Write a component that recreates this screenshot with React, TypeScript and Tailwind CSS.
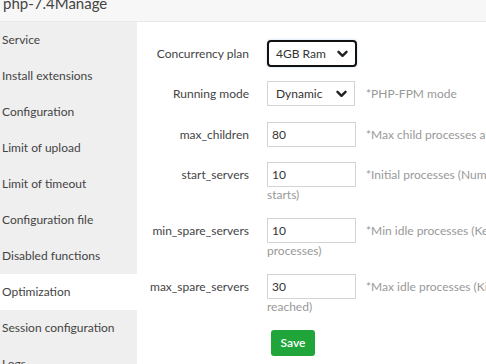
import type { ReactNode } from "react";

const MENU = [
  "Service",
  "Install extensions",
  "Configuration",
  "Limit of upload",
  "Limit of timeout",
  "Configuration file",
  "Disabled functions",
  "Optimization",
  "Session configuration",
  "Logs",
];

function Chevron() {
  return (
    <svg width="11" height="8" viewBox="0 0 11 8" className="pointer-events-none absolute right-[7px] top-1/2 -translate-y-1/2">
      <path d="M1.5 1.8 L5.5 5.8 L9.5 1.8" fill="none" stroke="#222" strokeWidth="2.4" strokeLinecap="round" strokeLinejoin="round" />
    </svg>
  );
}

function Row({ label, children, className = "" }: { label: string; children: ReactNode; className?: string }) {
  return (
    <div className={`flex items-start ${className}`}>
      <div className="w-[112px] h-[25px] flex items-center justify-end text-[12px] text-[#444] whitespace-nowrap">
        {label}
      </div>
      <div className="ml-[18px]">{children}</div>
    </div>
  );
}

function Field({ value, hint, more }: { value: string; hint: string; more?: string }) {
  return (
    <div>
      <div className="flex items-center">
        <input
          readOnly
          value={value}
          className="w-[89px] h-[25px] border border-[#d4d4d4] px-[4px] text-[12px] text-[#333] outline-none"
        />
        <span className="ml-[10px] text-[12px] text-[#999] whitespace-nowrap">{hint}</span>
      </div>
      {more && <div className="text-[12px] leading-[16px] text-[#999]">{more}</div>}
    </div>
  );
}

export default function App() {
  return (
    <div className="w-[486px] h-[364px] overflow-hidden bg-white font-['Segoe_UI','Lato',sans-serif]">
      {/* title */}
      <div className="h-[22px] bg-[#f7f7f7] border-b border-[#e8e8e8] overflow-hidden pl-[3px]">
        <div className="-mt-[6px] text-[15px] leading-[18px] text-[#444]">php-7.4Manage</div>
      </div>

      <div className="flex">
        {/* sidebar */}
        <aside className="w-[137px] shrink-0 bg-[#efefef] flex flex-col">
          {MENU.map((m) => (
            <div
              key={m}
              className={`h-[36px] shrink-0 flex items-center pl-[2px] text-[12px] text-[#444] whitespace-nowrap ${
                m === "Optimization" ? "bg-white" : ""
              }`}
            >
              {m}
            </div>
          ))}
        </aside>

        {/* form */}
        <main className="flex-1 pt-[18px]">
          <div className="flex items-center mb-[14px]">
            <div className="w-[112px] flex justify-end text-[12px] text-[#444]">Concurrency plan</div>
            <div className="ml-[18px] relative w-[90px] h-[27px] border-2 border-[#111] rounded-[4px] shadow-[0_0_3px_rgba(80,140,220,0.35)] flex items-center pl-[7px] text-[12px] text-[#333]">
              4GB Ram
              <Chevron />
            </div>
          </div>

          <Row label="Running mode" className="mb-[16px]">
            <div className="flex items-center">
              <div className="relative w-[88px] h-[25px] border border-[#d4d4d4] flex items-center pl-[8px] text-[12px] text-[#333]">
                Dynamic
                <Chevron />
              </div>
              <span className="ml-[11px] text-[12px] text-[#999] whitespace-nowrap">*PHP-FPM mode</span>
            </div>
          </Row>

          <Row label="max_children" className="mb-[15px]">
            <Field value="80" hint="*Max child processes allowed to be created" />
          </Row>

          <Row label="start_servers" className="mb-[15px]">
            <Field value="10" hint="*Initial processes (Number of processes when PHP-FPM" more="starts)" />
          </Row>

          <Row label="min_spare_servers" className="mb-[15px]">
            <Field value="10" hint="*Min idle processes (Keep the number of idle" more="processes)" />
          </Row>

          <Row label="max_spare_servers" className="mb-[14px]">
            <Field value="30" hint="*Max idle processes (Kill when idle processes" more="reached)" />
          </Row>

          <div className="pl-[134px]">
            <button className="h-[26px] w-[44px] rounded-[3px] bg-[#20a53a] text-white text-[12px] font-semibold">
              Save
            </button>
          </div>
        </main>
      </div>
    </div>
  );
}
